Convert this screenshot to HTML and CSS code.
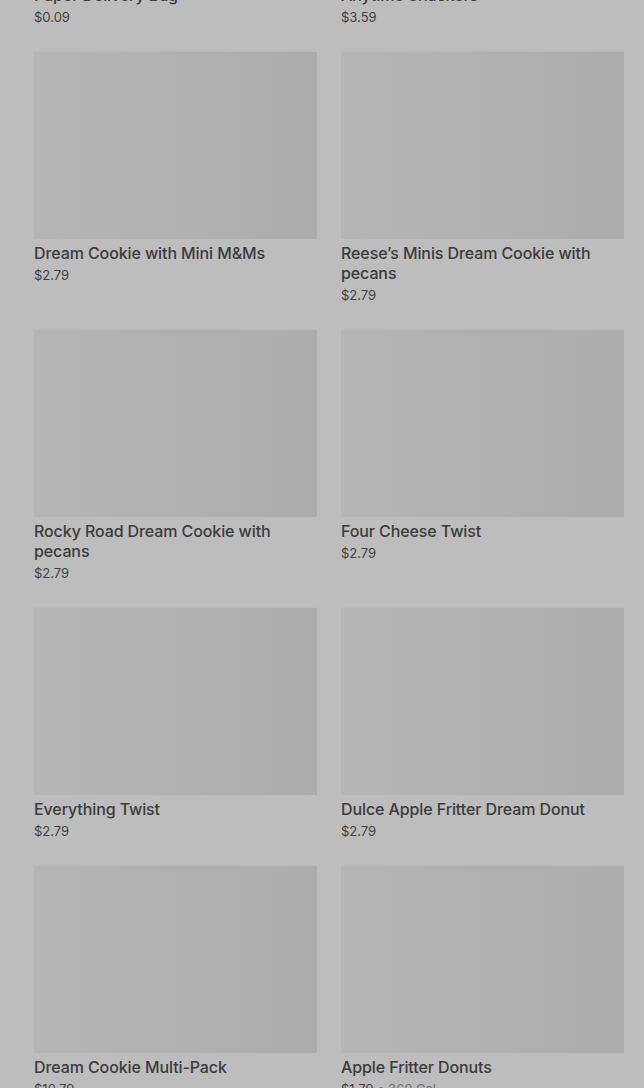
FILE: index.html
```html
<!DOCTYPE html>
<html lang="en">
<head>
  <meta charset="UTF-8" />
  <meta name="viewport" content="width=device-width, initial-scale=1.0" />
  <title>Menu</title>
  <link rel="stylesheet" href="styles.css">
</head>
<body>
  <main class="menu">
    <div class="grid">
      <div class="item">
        <div class="thumb"></div>
        <h3 class="name">Paper Delivery Bag</h3>
        <p class="price">$0.09</p>
      </div>
      <div class="item">
        <div class="thumb"></div>
        <h3 class="name">Anytime Snackers</h3>
        <p class="price">$3.59</p>
      </div>

      <div class="item">
        <div class="thumb"></div>
        <h3 class="name">Dream Cookie with Mini M&amp;Ms</h3>
        <p class="price">$2.79</p>
      </div>
      <div class="item">
        <div class="thumb"></div>
        <h3 class="name">Reese’s Minis Dream Cookie with pecans</h3>
        <p class="price">$2.79</p>
      </div>

      <div class="item">
        <div class="thumb"></div>
        <h3 class="name">Rocky Road Dream Cookie with pecans</h3>
        <p class="price">$2.79</p>
      </div>
      <div class="item">
        <div class="thumb"></div>
        <h3 class="name">Four Cheese Twist</h3>
        <p class="price">$2.79</p>
      </div>

      <div class="item">
        <div class="thumb"></div>
        <h3 class="name">Everything Twist</h3>
        <p class="price">$2.79</p>
      </div>
      <div class="item">
        <div class="thumb"></div>
        <h3 class="name">Dulce Apple Fritter Dream Donut</h3>
        <p class="price">$2.79</p>
      </div>

      <div class="item">
        <div class="thumb"></div>
        <h3 class="name">Dream Cookie Multi-Pack</h3>
        <p class="price">$10.79</p>
      </div>
      <div class="item">
        <div class="thumb"></div>
        <h3 class="name">Apple Fritter Donuts</h3>
        <p class="price">$1.79 <span class="cal">• 360 Cal.</span></p>
      </div>
    </div>
  </main>
</body>
</html>
```

FILE: styles.css
```css
* {
  margin: 0;
  padding: 0;
  box-sizing: border-box;
}

html,
body {
  height: 100%;
  overflow: hidden;
}

body {
  font-family: Inter, "Noto Sans", sans-serif;
  background: #bdbdbd;
  color: #3a3a3a;
}

.menu {
  padding: 0 20px 0 34px;
}

/* page is scrolled: first row sits above the fold */
.grid {
  margin-top: -207px;
  display: grid;
  grid-template-columns: 1fr 1fr;
  column-gap: 24px;
  row-gap: 25px;
  align-items: start;
}

.thumb {
  height: 188px;
  background: linear-gradient(to right, #b5b5b5, #acacac);
  border-top: 1px solid #b9b9b9;
}

.name {
  margin-top: 4px;
  font-size: 16px;
  line-height: 20px;
  font-weight: 500;
  color: #3b3b3b;
  letter-spacing: -0.1px;
}

.price {
  margin-top: 3px;
  font-size: 13px;
  line-height: 18px;
  color: #3f3f3f;
}

.cal {
  color: #707070;
}
```
